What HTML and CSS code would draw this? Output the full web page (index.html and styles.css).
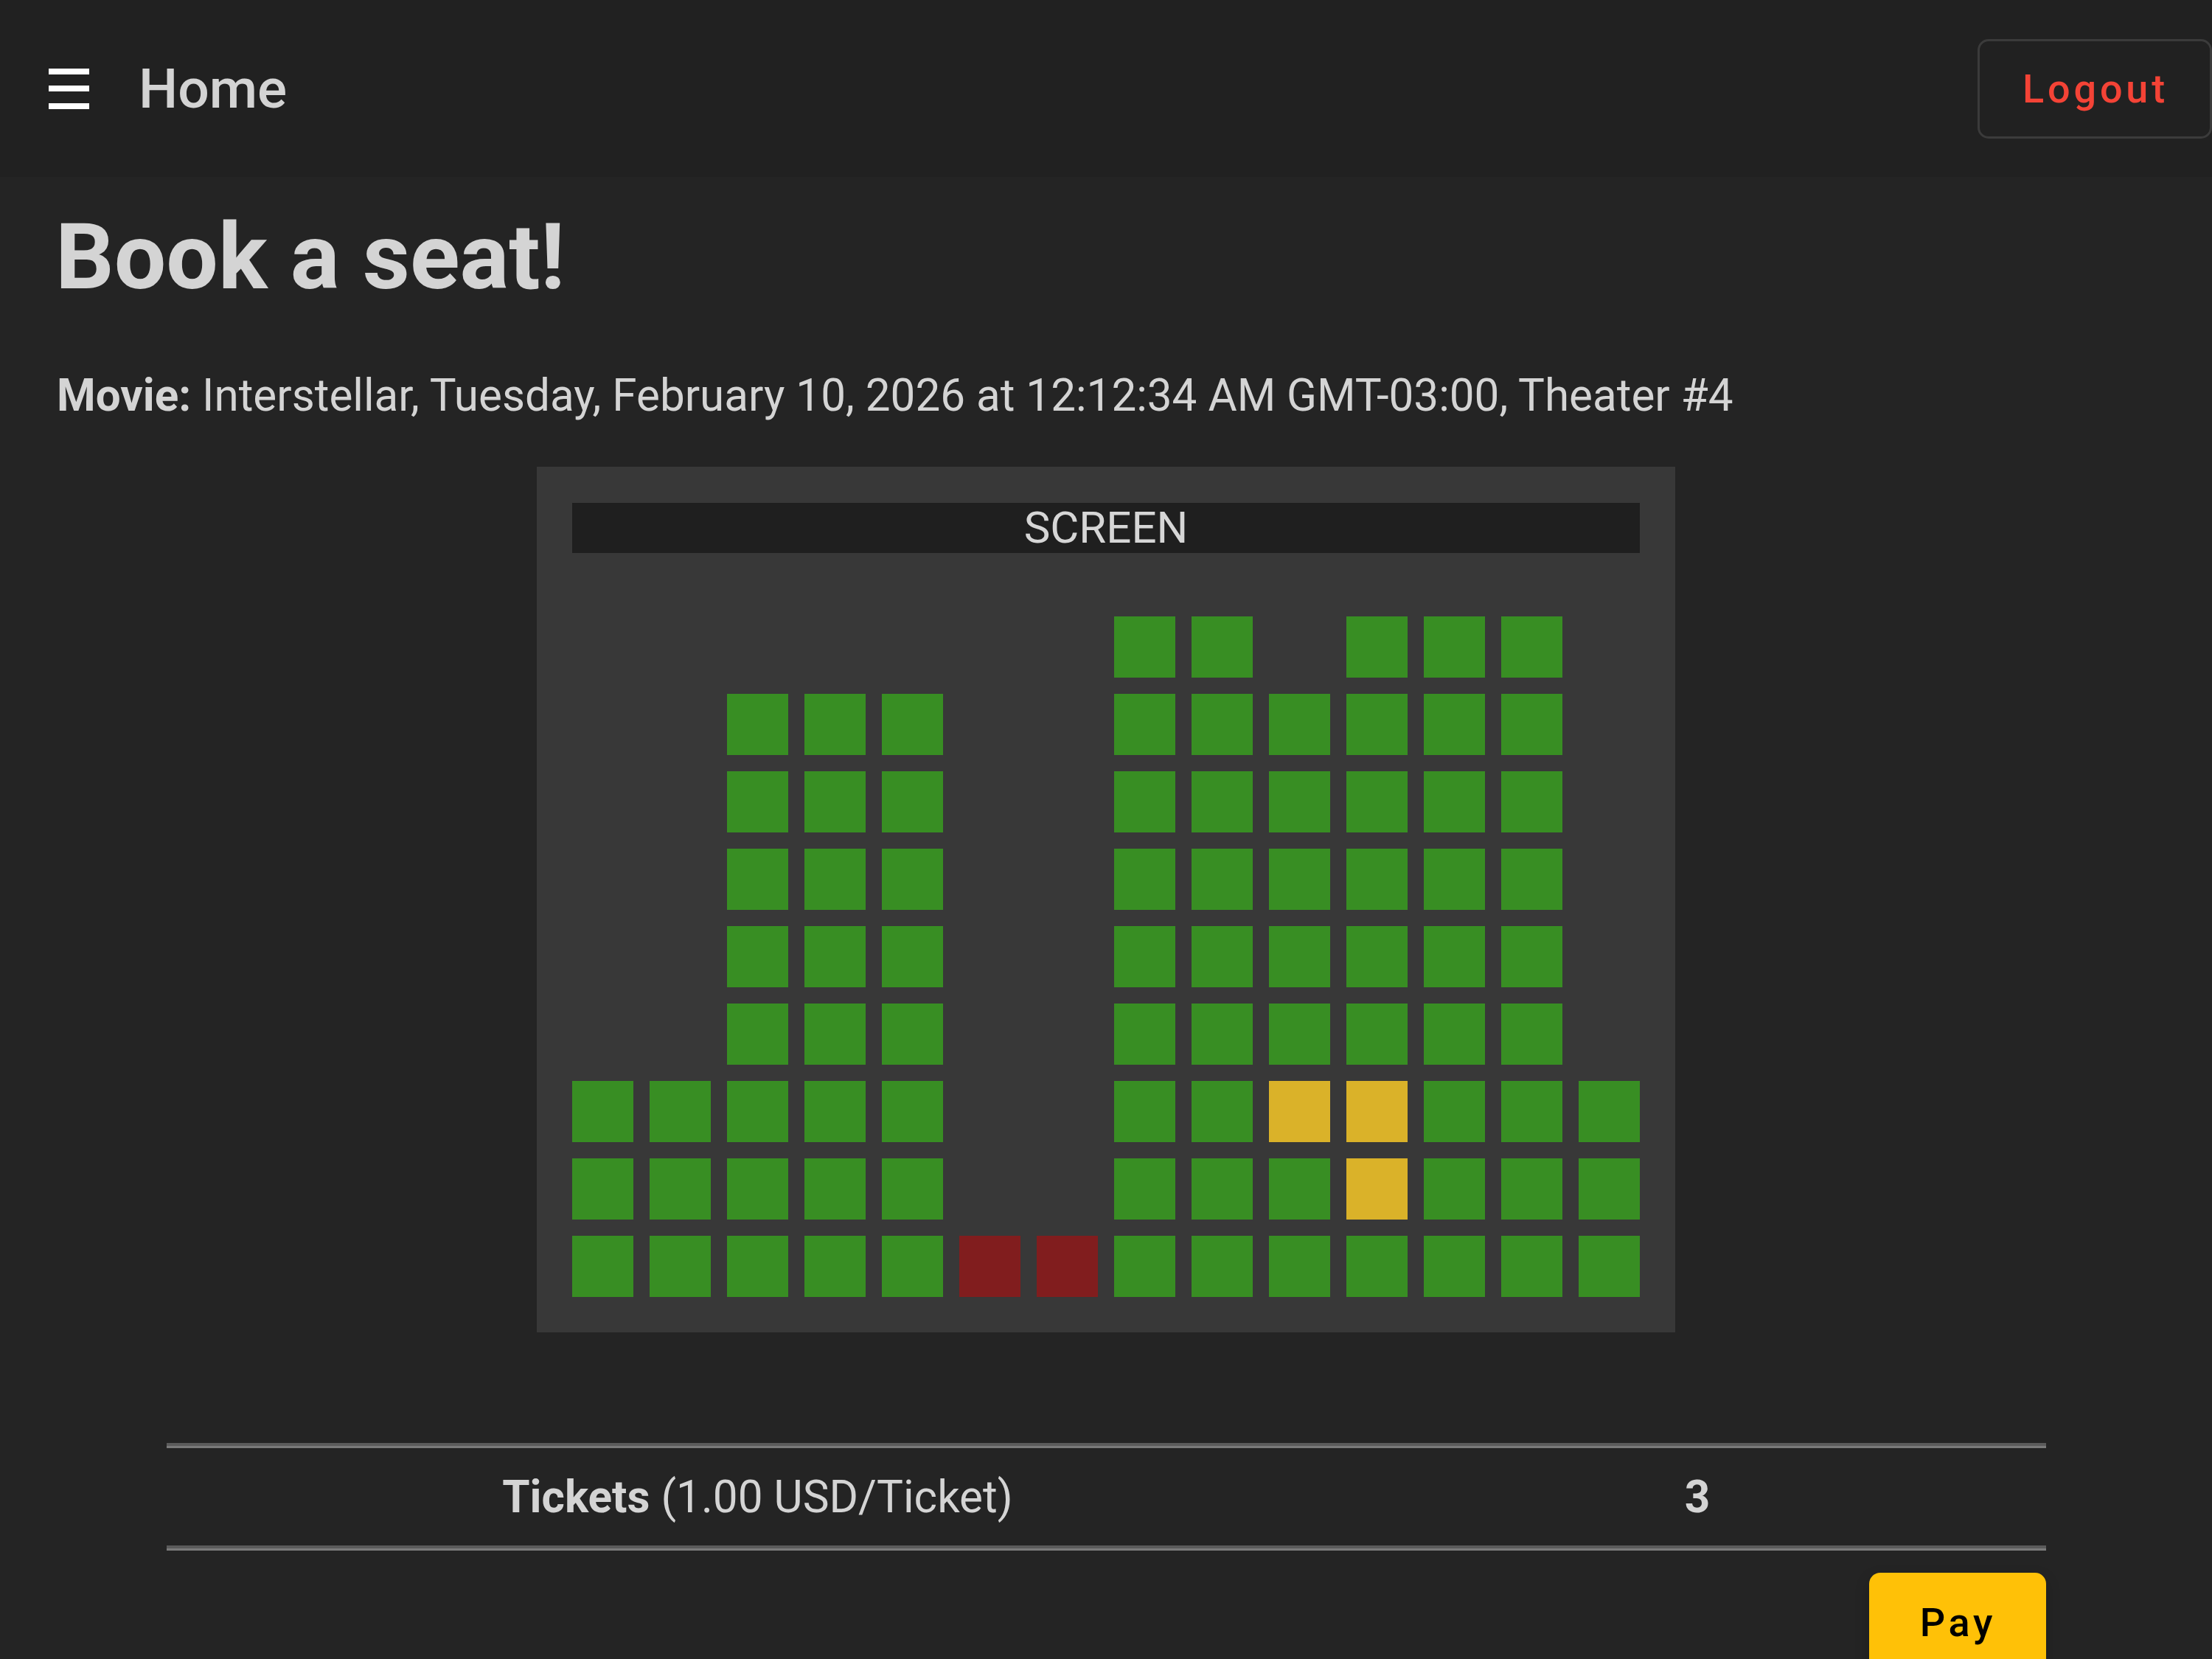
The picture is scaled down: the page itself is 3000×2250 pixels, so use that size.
FILE: index.html
```html
<!DOCTYPE html>
<html lang="en">
<head>
<meta charset="utf-8">
<title>Book a seat</title>
<link rel="stylesheet" href="styles.css">
</head>
<body>
<header class="topbar">
  <button class="menu" aria-label="Menu"><span></span><span></span><span></span></button>
  <div class="app-title">Home</div>
  <button class="logout">Logout</button>
</header>
<main class="content">
  <h1 class="page-title">Book a seat!</h1>
  <p class="movie"><strong>Movie:</strong> Interstellar, Tuesday, February 10, 2026 at 12:12:34 AM GMT-03:00, Theater #4</p>
  <div class="theater">
    <div class="screen">SCREEN</div>
    <div class="seats">
      <div></div><div></div><div></div><div></div><div></div><div></div><div></div><div class="g"></div><div class="g"></div><div></div><div class="g"></div><div class="g"></div><div class="g"></div><div></div>
      <div></div><div></div><div class="g"></div><div class="g"></div><div class="g"></div><div></div><div></div><div class="g"></div><div class="g"></div><div class="g"></div><div class="g"></div><div class="g"></div><div class="g"></div><div></div>
      <div></div><div></div><div class="g"></div><div class="g"></div><div class="g"></div><div></div><div></div><div class="g"></div><div class="g"></div><div class="g"></div><div class="g"></div><div class="g"></div><div class="g"></div><div></div>
      <div></div><div></div><div class="g"></div><div class="g"></div><div class="g"></div><div></div><div></div><div class="g"></div><div class="g"></div><div class="g"></div><div class="g"></div><div class="g"></div><div class="g"></div><div></div>
      <div></div><div></div><div class="g"></div><div class="g"></div><div class="g"></div><div></div><div></div><div class="g"></div><div class="g"></div><div class="g"></div><div class="g"></div><div class="g"></div><div class="g"></div><div></div>
      <div></div><div></div><div class="g"></div><div class="g"></div><div class="g"></div><div></div><div></div><div class="g"></div><div class="g"></div><div class="g"></div><div class="g"></div><div class="g"></div><div class="g"></div><div></div>
      <div class="g"></div><div class="g"></div><div class="g"></div><div class="g"></div><div class="g"></div><div></div><div></div><div class="g"></div><div class="g"></div><div class="y"></div><div class="y"></div><div class="g"></div><div class="g"></div><div class="g"></div>
      <div class="g"></div><div class="g"></div><div class="g"></div><div class="g"></div><div class="g"></div><div></div><div></div><div class="g"></div><div class="g"></div><div class="g"></div><div class="y"></div><div class="g"></div><div class="g"></div><div class="g"></div>
      <div class="g"></div><div class="g"></div><div class="g"></div><div class="g"></div><div class="g"></div><div class="r"></div><div class="r"></div><div class="g"></div><div class="g"></div><div class="g"></div><div class="g"></div><div class="g"></div><div class="g"></div><div class="g"></div>
    </div>
  </div>
  <section class="summary">
    <div class="rule"></div>
    <div class="summary-row">
      <div class="label"><strong>Tickets</strong> (1.00 USD/Ticket)</div>
      <div class="qty">3</div>
    </div>
    <div class="rule"></div>
    <div class="actions"><button class="pay">Pay</button></div>
  </section>
</main>
</body>
</html>
```
FILE: styles.css
```css
html, body {
  margin: 0;
  padding: 0;
}
body {
  background: #242424;
  color: #d4d4d4;
  font-family: Roboto, "Liberation Sans", sans-serif;
  overflow: hidden;
}
.topbar {
  height: 240px;
  background: #212121;
  display: flex;
  align-items: center;
  padding-left: 66px;
  box-sizing: border-box;
}
.menu {
  width: 55px;
  height: 55px;
  padding: 0;
  border: 0;
  background: none;
  display: flex;
  flex-direction: column;
  justify-content: space-between;
}
.menu span {
  display: block;
  height: 8px;
  width: 55px;
  background: #ffffff;
}
.app-title {
  margin-left: 67px;
  font-size: 75px;
  line-height: 75px;
  font-weight: 500;
  color: #d3d3d3;
}
.logout {
  margin-left: auto;
  width: 318px;
  height: 135px;
  box-sizing: border-box;
  border: 3px solid #3b3b3b;
  border-radius: 15px;
  background: transparent;
  color: #f44336;
  font-family: Roboto, "Liberation Sans", sans-serif;
  font-size: 54px;
  font-weight: 500;
  letter-spacing: 4.8px;
  padding: 0 0 0 2px;
}
.content {
  padding: 0 75px;
}
.page-title {
  margin: 34px 0 0;
  font-size: 125px;
  line-height: 150px;
  font-weight: 700;
  color: #d4d4d4;
}
.movie {
  margin: 68px 0 0 2px;
  font-size: 60.2px;
  line-height: 90px;
  color: #d4d4d4;
}
.movie strong {
  font-weight: 700;
}
.theater {
  width: 1448px;
  margin: 51px auto 0;
  padding: 49px 48px 48px;
  background: #383838;
}
.screen {
  height: 68px;
  background: #1f1f1f;
  color: #d6d6d6;
  font-size: 60px;
  line-height: 68px;
  text-align: center;
  margin-bottom: 86px;
}
.seats {
  display: grid;
  grid-template-columns: repeat(14, 83px);
  grid-auto-rows: 83px;
  gap: 22px;
}
.seats .g { background: #388e23; }
.seats .y { background: #dab229; }
.seats .r { background: #811d1e; }
.summary {
  width: 2549px;
  margin: 150px auto 0;
}
.rule {
  height: 0;
  border-top: 4px solid #5b5b5b;
  border-bottom: 3px solid #7a7a7a;
  border-left: 0;
  border-right: 0;
}
.summary-row {
  display: grid;
  grid-template-columns: 1604px 1fr;
  height: 132px;
  align-items: center;
  font-size: 60.3px;
  color: #d4d4d4;
}
.summary-row .label,
.summary-row .qty {
  text-align: center;
}
.summary-row strong {
  font-weight: 700;
}
.qty {
  font-weight: 700;
}
.actions {
  display: flex;
  justify-content: flex-end;
  margin-top: 30px;
}
.pay {
  width: 240px;
  height: 135px;
  border: 0;
  border-radius: 15px;
  background: #ffc107;
  color: #000000;
  font-family: Roboto, "Liberation Sans", sans-serif;
  font-size: 54px;
  font-weight: 500;
  letter-spacing: 4.8px;
  padding: 0 0 0 2px;
  box-shadow: 0 8px 20px rgba(0, 0, 0, 0.2);
}
```
